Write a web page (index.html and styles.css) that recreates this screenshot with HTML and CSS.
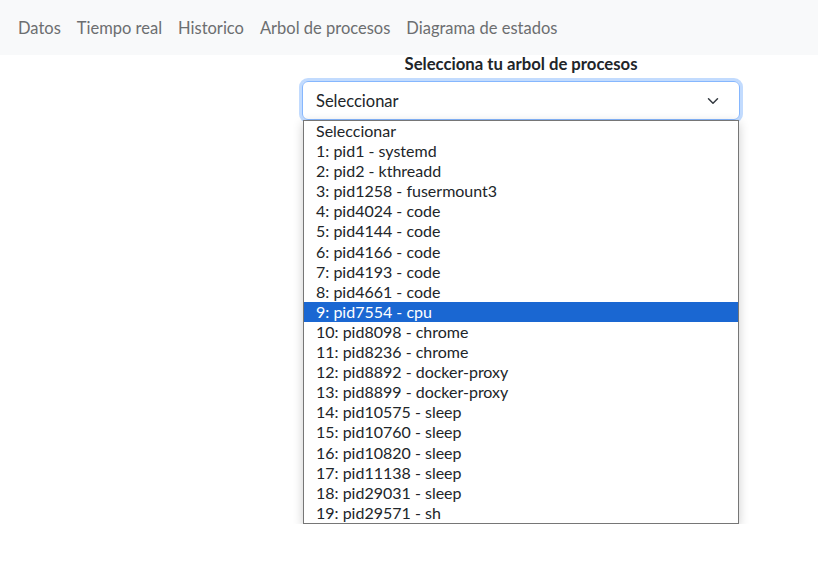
FILE: index.html
```html
<!DOCTYPE html>
<html lang="es">
<head>
<meta charset="utf-8">
<title>Arbol de procesos</title>
<link rel="stylesheet" href="styles.css">
</head>
<body>
<nav class="navbar">
  <a class="nav-link" href="#">Datos</a>
  <a class="nav-link" href="#">Tiempo real</a>
  <a class="nav-link" href="#">Historico</a>
  <a class="nav-link" href="#">Arbol de procesos</a>
  <a class="nav-link" href="#">Diagrama de estados</a>
</nav>
<main class="content">
  <div class="picker">
    <div class="picker-label">Selecciona tu arbol de procesos</div>
    <div class="select">
      <span class="select-value">Seleccionar</span>
      <svg class="chevron" width="16" height="16" viewBox="0 0 16 16"><path d="M2 5l6 6 6-6" fill="none" stroke="#343a40" stroke-width="2" stroke-linecap="round" stroke-linejoin="round"/></svg>
    </div>
    <ul class="options">
      <li class="option">Seleccionar</li>
      <li class="option">1: pid1 - systemd</li>
      <li class="option">2: pid2 - kthreadd</li>
      <li class="option">3: pid1258 - fusermount3</li>
      <li class="option">4: pid4024 - code</li>
      <li class="option">5: pid4144 - code</li>
      <li class="option">6: pid4166 - code</li>
      <li class="option">7: pid4193 - code</li>
      <li class="option">8: pid4661 - code</li>
      <li class="option option-active">9: pid7554 - cpu</li>
      <li class="option">10: pid8098 - chrome</li>
      <li class="option">11: pid8236 - chrome</li>
      <li class="option">12: pid8892 - docker-proxy</li>
      <li class="option">13: pid8899 - docker-proxy</li>
      <li class="option">14: pid10575 - sleep</li>
      <li class="option">15: pid10760 - sleep</li>
      <li class="option">16: pid10820 - sleep</li>
      <li class="option">17: pid11138 - sleep</li>
      <li class="option">18: pid29031 - sleep</li>
      <li class="option">19: pid29571 - sh</li>
    </ul>
  </div>
</main>
</body>
</html>
```
FILE: styles.css
```css
* { box-sizing: border-box; }
html, body { margin: 0; padding: 0; }
body {
  font-family: "Lato", "Liberation Sans", sans-serif;
  font-size: 16px;
  line-height: 1.5;
  color: #212529;
  background: #fff;
}
.navbar {
  display: flex;
  align-items: center;
  height: 55px;
  padding: 0 10px;
  background: #f8f9fa;
}
.nav-link {
  color: #6c6e70;
  text-decoration: none;
  font-size: 16.5px;
  padding: 8px 8px;
  line-height: 24px;
}
.content {
  padding-left: 302px;
}
.picker {
  width: 438px;
}
.picker-label {
  font-weight: bold;
  font-size: 16.7px;
  text-align: center;
  line-height: 20px;
  margin-top: -1px;
  margin-bottom: 7px;
}
.select {
  display: flex;
  align-items: center;
  justify-content: space-between;
  height: 39px;
  padding: 1px 20px 0 13px;
  border: 1px solid #86b7fe;
  border-radius: 6px;
  box-shadow: 0 0 0 3px rgba(13, 110, 253, 0.25);
  font-size: 16.5px;
}
.chevron { display: block; width: 12px; height: 12px; }
.options {
  list-style: none;
  margin: 0 1px;
  padding: 0;
  border: 1px solid #767676;
  background: #fff;
  box-shadow: 0 3px 10px rgba(0, 0, 0, 0.2);
}
.option {
  height: 20.1px;
  line-height: 20px;
  padding-left: 12px;
}
.option-active {
  background: #1a67d2;
  color: #fff;
}
```
